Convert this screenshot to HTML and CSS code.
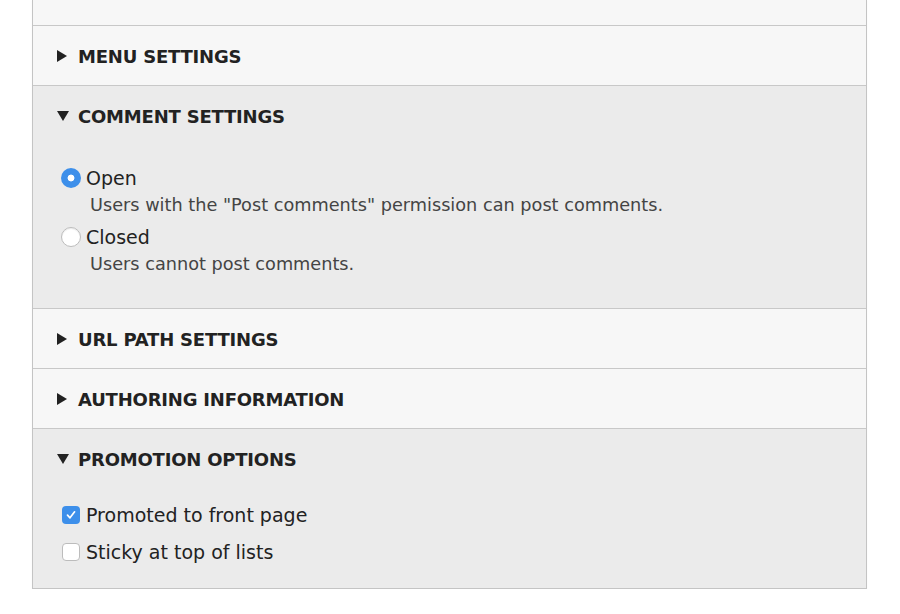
FILE: index.html
```html
<!doctype html>
<html>
<head>
<meta charset="utf-8">
<link rel="stylesheet" href="styles.css">
<title>Node settings</title>
</head>
<body>

<div class="accordion">
    <div class="panel-top"></div>

    <div class="item">
        <div class="summary"><span class="arrow closed"></span>Menu settings</div>
    </div>

    <div class="item open">
        <div class="summary"><span class="arrow"></span>Comment settings</div>
        <div class="content comments">
            <div class="option">
                <label><span class="radio checked"></span>Open</label>
                <div class="desc">Users with the "Post comments" permission can post comments.</div>
            </div>
            <div class="option">
                <label><span class="radio"></span>Closed</label>
                <div class="desc">Users cannot post comments.</div>
            </div>
        </div>
    </div>

    <div class="item">
        <div class="summary"><span class="arrow closed"></span>URL path settings</div>
    </div>

    <div class="item">
        <div class="summary"><span class="arrow closed"></span>Authoring information</div>
    </div>

    <div class="item open">
        <div class="summary"><span class="arrow"></span>Promotion options</div>
        <div class="content promo">
            <label><span class="check checked"><svg width="12" height="12" viewBox="0 0 12 12"><path d="M2.5 6.2 L5 8.8 L9.6 2.8" fill="none" stroke="#fff" stroke-width="1.7" stroke-linecap="round" stroke-linejoin="round"/></svg></span>Promoted to front page</label>
            <label><span class="check"></span>Sticky at top of lists</label>
        </div>
    </div>
</div>

</body>
</html>
```

FILE: styles.css
```css
html
{
    background:#fff;
}
body
{
    margin:0;
    font-family:"DejaVu Sans", Verdana, sans-serif;
    color:#222;
}
.accordion
{
    margin:0 33px 0 32px;
    border-left:1px solid #c4c4c4;
    border-right:1px solid #c4c4c4;
    border-bottom:1px solid #c4c4c4;
    box-shadow:0 1px 1px rgba(0,0,0,0.06);
}
.panel-top
{
    height:25px;
    background:#f7f7f7;
    border-bottom:1px solid #c8c8c8;
}
.item
{
    background:#f7f7f7;
    border-bottom:1px solid #c8c8c8;
}
.item:last-child
{
    border-bottom:none;
}
.item.open
{
    background:#ebebeb;
}
.summary
{
    height:58px;
    padding-top:1px;
    display:flex;
    align-items:center;
    padding-left:24px;
    font-size:18px;
    font-weight:bold;
    text-transform:uppercase;
    color:#222;
    letter-spacing:-0.2px;
}
.arrow
{
    width:0;
    height:0;
    margin-right:9px;
    border-left:6px solid transparent;
    border-right:6px solid transparent;
    border-top:10px solid #222;
}
.arrow.closed
{
    border-top:6px solid transparent;
    border-bottom:6px solid transparent;
    border-left:10px solid #222;
    border-right:0;
    margin-right:11px;
}
.content
{
    padding:0 28px 0 28px;
}
.comments
{
    padding-top:22px;
    padding-bottom:34px;
}
.option
{
    margin-bottom:11px;
}
.option:last-child
{
    margin-bottom:0;
}
label
{
    display:flex;
    align-items:center;
    font-size:19px;
    line-height:22px;
    color:#222;
}
.desc
{
    padding-left:29px;
    margin-top:6px;
    font-size:17.7px;
    line-height:20px;
    color:#444;
}
.radio
{
    box-sizing:border-box;
    width:20px;
    height:20px;
    margin-right:5px;
    border-radius:50%;
    background:#fff;
    border:1px solid #bcbcbc;
    box-shadow:inset 0 1px 1px rgba(0,0,0,0.08);
}
.radio.checked
{
    border:none;
    background:radial-gradient(circle, #fff 0, #fff 3px, #3d8fea 3.8px);
    box-shadow:none;
}
.promo
{
    padding-top:16px;
    padding-bottom:25px;
    display:flex;
    flex-direction:column;
    gap:15px;
}
.check
{
    box-sizing:border-box;
    width:18px;
    height:18px;
    margin-left:1px;
    margin-right:6px;
    border-radius:4px;
    background:#fff;
    border:1px solid #bcbcbc;
    display:flex;
    align-items:center;
    justify-content:center;
}
.check.checked
{
    border:none;
    background:#3d8fea;
}
```
